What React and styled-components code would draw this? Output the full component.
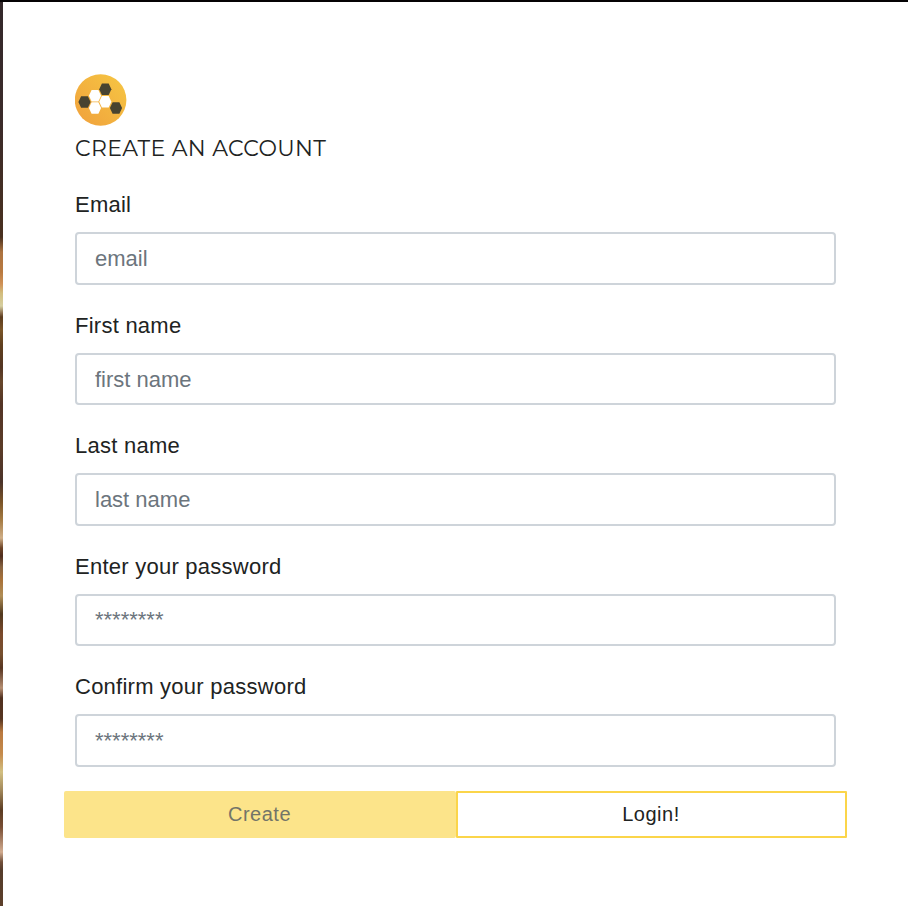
import React from "react";
import styled, { createGlobalStyle } from "styled-components";

const GlobalStyle = createGlobalStyle`
  * { box-sizing: border-box; }
  body { margin: 0; background: #fff; font-family: "Liberation Sans", Arial, sans-serif; color: #212322; }
`;

const Page = styled.div`
  display: grid;
  grid-template-columns: 3px 1fr;
  height: 906px;
  border-top: 2px solid #050304;
  overflow: hidden;
`;

const PhotoEdge = styled.div`
  background: linear-gradient(
    to bottom,
    #33282a 0px, #3b2b2a 120px, #49301f 235px, #ac7340 250px, #b97a40 270px,
    #cf9156 282px, #d2bc7c 291px, #d6cfa0 304px, #8b6e4e 311px, #5c3c1e 315px,
    #7a5528 328px, #60401f 343px, #533523 365px, #67472b 380px, #533426 402px,
    #5b3c28 445px, #4b332a 480px, #7a5428 500px, #a57b43 518px, #cfae86 536px,
    #6d4427 546px, #4f2d1e 554px, #876340 565px, #a97239 578px, #b08e56 594px,
    #51391f 612px, #7b4a2c 632px, #76502f 652px, #573521 666px, #b58e72 686px,
    #50301f 696px, #563521 717px, #b9793f 730px, #c58b4c 752px, #d2bf81 770px,
    #a3895b 788px, #5b3c23 808px, #784e34 825px, #d2ac90 850px, #71503a 860px,
    #553c2b 868px, #5c3f2a 904px
  );
`;

const Panel = styled.main`
  display: flex;
  flex-direction: column;
  padding: 72px 72px 0;
`;

const Logo = styled.svg`
  display: block;
  width: 52px;
  height: 52px;
`;

const Title = styled.h1`
  width: max-content;
  margin: 9px 0 0;
  font: 400 22px/28px Montserrat, Lato, sans-serif;
  letter-spacing: 0.34px;
`;

const Form = styled.form`
  display: flex;
  flex-direction: column;
  gap: 23.95px;
  margin-top: 25.4px;
`;

const Field = styled.label`
  display: flex;
  flex-direction: column;
  gap: 11px;
  width: 761px;
  font-size: 22px;
  line-height: 33px;
  letter-spacing: 0.25px;
`;

const Input = styled.input`
  width: 100%;
  height: 52.5px;
  padding: 1px 18px 0;
  border: 2px solid #ced4da;
  border-radius: 4px;
  outline: none;
  background: #fff;
  font: 22px "Liberation Sans", Arial, sans-serif;
  color: #495057;
  &::placeholder { color: #6c757d; opacity: 1; }
`;

const Actions = styled.div`
  display: grid;
  grid-template-columns: 392px 391px;
  width: 783px;
  margin: 0 0 0 -11px;
`;

const Button = styled.button`
  height: 47px;
  padding: 0 1px 0 0;
  border: 2px solid ${(p) => (p.$filled ? "#fce48a" : "#fbd54a")};
  border-radius: ${(p) => (p.$filled ? "2px" : "1px")};
  background: ${(p) => (p.$filled ? "#fce48a" : "#fff")};
  color: ${(p) => (p.$filled ? "#737468" : "#212322")};
  font: 20px "Liberation Sans", Arial, sans-serif;
  letter-spacing: 0.5px;
`;

const fields = [
  ["Email", "email", "email"],
  ["First name", "first name", "text"],
  ["Last name", "last name", "text"],
  ["Enter your password", "********", "password"],
  ["Confirm your password", "********", "password"],
];

const cells = [
  [30.3, 15.3, "#484330"],
  [9.5, 28, "#484330"],
  [41, 34, "#484330"],
  [20, 21.8, "#fff"],
  [30.3, 27.8, "#fff"],
  [20, 34, "#fff"],
];

function HiveLogo() {
  return (
    <Logo viewBox="0 0 52 52" aria-label="Honeycomb">
      <defs>
        <linearGradient id="honey" x1="0" y1="1" x2="1" y2="0">
          <stop offset="0" stopColor="#f0a03c" />
          <stop offset="1" stopColor="#f6c743" />
        </linearGradient>
      </defs>
      <circle cx="25.6" cy="26" r="25.8" fill="url(#honey)" />
      {cells.map(([x, y, fill]) => (
        <polygon
          key={`${x}-${y}`}
          points="-6.1,0 -3.4,-5.8 3.4,-5.8 6.1,0 3.4,5.8 -3.4,5.8"
          transform={`translate(${x} ${y})`}
          fill={fill}
        />
      ))}
    </Logo>
  );
}

export default function App() {
  return (
    <>
      <GlobalStyle />
      <Page>
        <PhotoEdge />
        <Panel>
          <HiveLogo />
          <Title>CREATE AN ACCOUNT</Title>
          <Form>
            {fields.map(([label, placeholder, type]) => (
              <Field key={label}>
                {label}
                <Input type={type} placeholder={placeholder} />
              </Field>
            ))}
            <Actions>
              <Button type="button" $filled>Create</Button>
              <Button type="button">Login!</Button>
            </Actions>
          </Form>
        </Panel>
      </Page>
    </>
  );
}
